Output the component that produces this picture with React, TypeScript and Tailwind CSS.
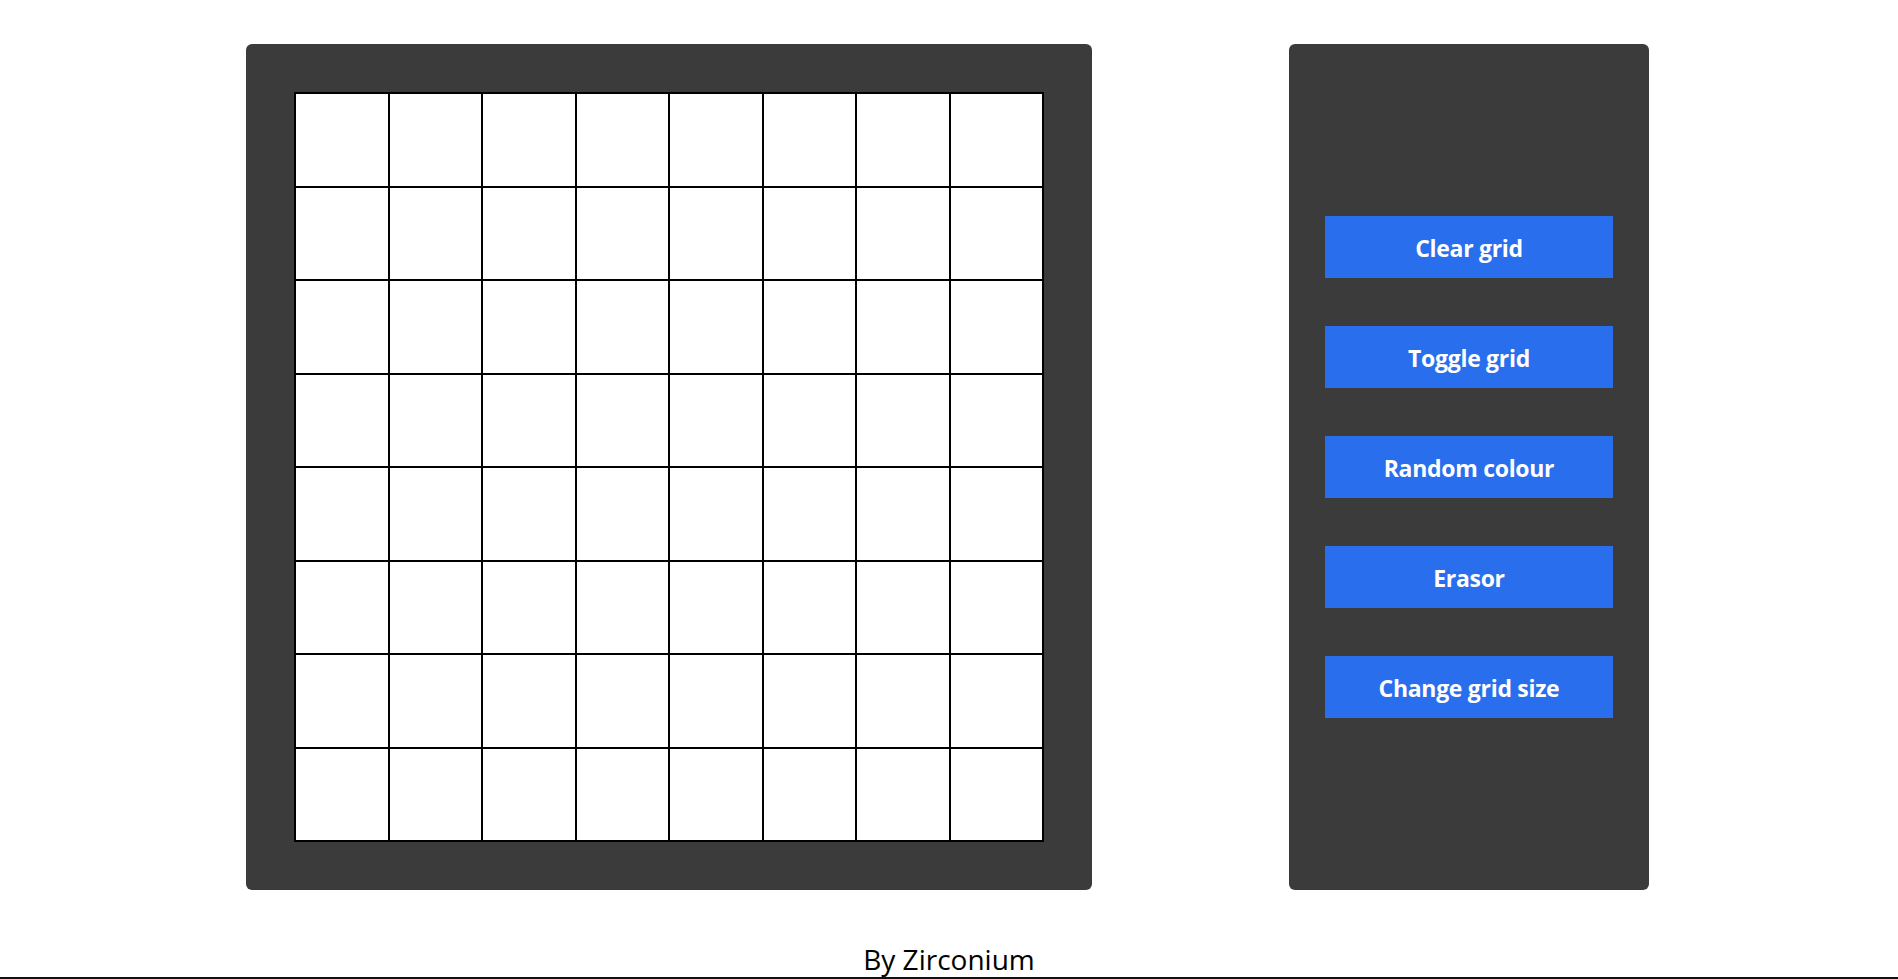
import React from "react"

const buttons = ["Clear grid", "Toggle grid", "Random colour", "Erasor", "Change grid size"]

export default function App() {
  const cells = Array.from({ length: 64 }, (_, i) => i)

  return (
    <div className="min-h-[1000px] bg-white font-['Open_Sans',sans-serif]">
      <main className="flex items-start gap-[197px] pl-[246px] pt-[44px]">
        {/* Drawing board */}
        <section className="flex h-[846px] w-[846px] items-center justify-center rounded-[6px] bg-[#3b3b3b]">
          <div className="grid h-[750px] w-[750px] grid-cols-8 grid-rows-8 border border-black bg-white">
            {cells.map((c) => (
              <div key={c} className="border border-black bg-white" />
            ))}
          </div>
        </section>

        {/* Controls */}
        <aside className="flex h-[846px] w-[360px] flex-col items-center justify-center gap-[48px] rounded-[6px] bg-[#3b3b3b]">
          {buttons.map((label) => (
            <button
              key={label}
              type="button"
              className="h-[62px] w-[288px] bg-[#296eed] pt-[3px] text-[23px] font-bold tracking-[-0.3px] text-white"
            >
              {label}
            </button>
          ))}
        </aside>
      </main>

      <footer className="mt-[51px] text-center text-[28px] leading-[36px] text-black">
        By Zirconium
      </footer>
      <div className="h-[30px] bg-[#111]" />
    </div>
  )
}
